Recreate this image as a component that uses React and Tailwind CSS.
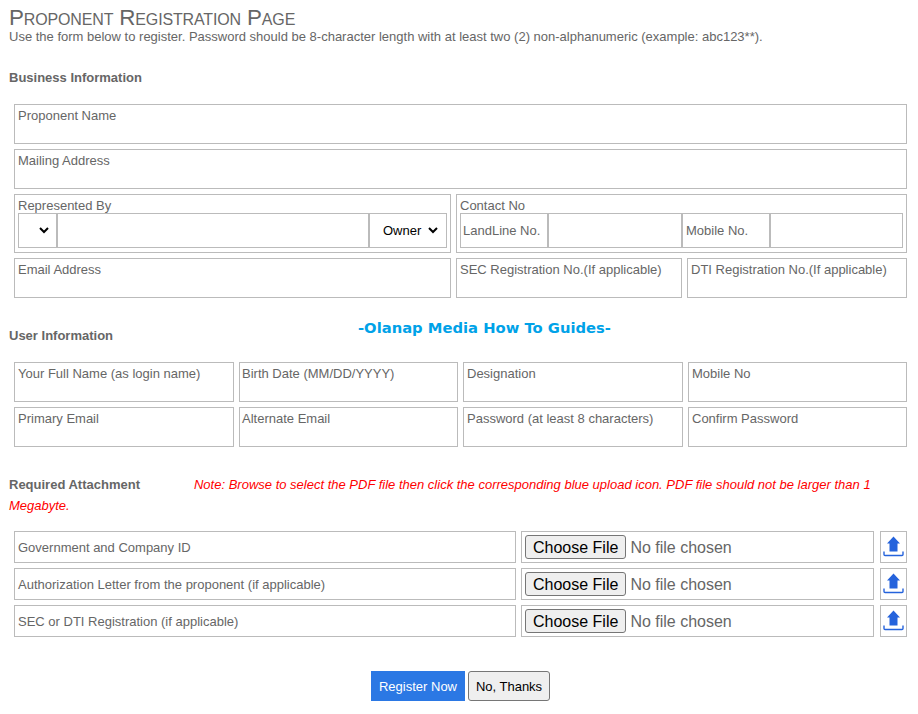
import React from 'react';

const Field = ({ label, className = '' }) => (
  <label className={`block h-10 border border-[#bbb] px-[3px] pt-[3px] text-[13px] leading-[16px] text-[#666] ${className}`}>
    <span className="block whitespace-nowrap">{label}</span>
    <input type="text" className="block h-[17px] w-full outline-none" />
  </label>
);

const UploadIcon = () => (
  <svg width="22" height="22" viewBox="0 0 22 22" fill="none">
    <path d="M10.5 0.5 L17 7.5 H14.5 V15.5 H6.5 V7.5 H4 Z" fill="#2563dc" />
    <path d="M1 15.5 V18.5 Q1 19.5 2 19.5 H19 Q20 19.5 20 18.5 V15.5" stroke="#2563dc" strokeWidth="1.4" />
  </svg>
);

const AttachmentRow = ({ label }) => (
  <div className="flex h-8 gap-[5px]">
    <div className="flex w-[502px] items-center border border-[#bbb] px-[3px] pt-px text-[13px] text-[#666]">{label}</div>
    <div className="flex w-[353px] items-center border border-[#bbb] px-[3px]">
      <input type="file" className="w-full text-[16px] text-[#666] file:mr-[4px] file:h-6 file:rounded-[3px] file:border file:border-[#767676] file:bg-[#efefef] file:px-[7px] file:text-black" />
    </div>
    <button type="button" className="ml-px flex w-[27px] items-center justify-center border border-[#bbb]">
      <UploadIcon />
    </button>
  </div>
);

export default function App() {
  return (
    <div className="relative h-[714px] overflow-hidden bg-white font-['Liberation_Sans',Arial,sans-serif] text-[#666]">
      <div className="pl-[9px] pt-[6px]">
        <h1 className="text-[22.4px] leading-[24px] tracking-[-0.15px] [font-variant:small-caps]">Proponent Registration Page</h1>
        <p className="text-[13px] leading-[14px]">Use the form below to register. Password should be 8-character length with at least two (2) non-alphanumeric (example: abc123**).</p>
        <h2 className="mt-[26px] text-[13px] font-bold leading-[16px]">Business Information</h2>
      </div>

      <div className="ml-[14px] mt-[18px] flex w-[893px] flex-col gap-[5px]">
        <Field label="Proponent Name" />
        <Field label="Mailing Address" />
        <div className="flex gap-[5px]">
          <div className="h-[59px] w-[437px] border border-[#bbb] px-[3px] pt-[3px] text-[13px] leading-[15px]">
            <span className="block">Represented By</span>
            <div className="flex h-[35px] border border-[#bbb]">
              <div className="w-[39px] border-r-2 border-[#bbb]">
                <select className="h-full w-[33px] text-black"><option></option></select>
              </div>
              <input type="text" className="min-w-0 flex-1 outline-none" />
              <div className="w-[78px] border-l-2 border-[#bbb]">
                <select defaultValue="Owner" className="h-full w-[71px] pl-[9px] text-black"><option>Owner</option></select>
              </div>
            </div>
          </div>
          <div className="h-[59px] w-[451px] border border-[#bbb] px-[3px] pt-[3px] text-[13px] leading-[15px]">
            <span className="block">Contact No</span>
            <div className="flex h-[35px] items-center whitespace-nowrap border border-[#bbb]">
              <span className="flex h-full w-[88px] items-center border-r-2 border-[#bbb] pl-[2px]">LandLine No.</span>
              <input type="text" className="h-full w-[134px] border-r-2 border-[#bbb] outline-none" />
              <span className="flex h-full w-[88px] items-center border-r-2 border-[#bbb] px-[3px]">Mobile No.</span>
              <input type="text" className="h-full min-w-0 flex-1 outline-none" />
            </div>
          </div>
        </div>
        <div className="flex gap-[5px]">
          <Field label="Email Address" className="w-[437px]" />
          <Field label="SEC Registration No.(If applicable)" className="w-[226px]" />
          <Field label="DTI Registration No.(If applicable)" className="w-[220px]" />
        </div>
      </div>

      <h2 className="ml-[9px] mt-[30px] text-[13px] font-bold leading-[16px]">User Information</h2>
      <div className="absolute left-[358px] top-[319px] font-['DejaVu_Sans',Verdana,sans-serif] text-[14.75px] font-bold leading-[18px] text-[#00a2e8]">-Olanap Media How To Guides-</div>

      <div className="ml-[14px] mt-[18px] grid w-[893px] grid-cols-[220px_219px_220px_219px] gap-[5px]">
        <Field label="Your Full Name (as login name)" />
        <Field label="Birth Date (MM/DD/YYYY)" className="pl-[2px]" />
        <Field label="Designation" />
        <Field label="Mobile No" />
        <Field label="Primary Email" />
        <Field label="Alternate Email" className="pl-[2px]" />
        <Field label="Password (at least 8 characters)" />
        <Field label="Confirm Password" />
      </div>

      <div className="mt-[27px] w-[880px] pl-[9px] text-[13px] leading-[21px]">
        <span className="mr-[54px] font-bold">Required Attachment</span>
        <i className="text-[#ff0000]">Note: Browse to select the PDF file then click the corresponding blue upload icon. PDF file should not be larger than 1 Megabyte.</i>
      </div>

      <div className="ml-[14px] mt-[15px] flex w-[893px] flex-col gap-[5px]">
        <AttachmentRow label="Government and Company ID" />
        <AttachmentRow label="Authorization Letter from the proponent (if applicable)" />
        <AttachmentRow label="SEC or DTI Registration (if applicable)" />
      </div>

      <div className="mt-[34px] flex justify-center gap-[3px] pl-[3px] text-[13px]">
        <button type="button" className="h-[30px] w-[94px] bg-[#2b78e4] pt-px text-white">Register Now</button>
        <button type="button" className="h-[30px] w-[82px] rounded-[3px] border border-[#767676] bg-[#efefef] pt-px text-black">No, Thanks</button>
      </div>
    </div>
  );
}
